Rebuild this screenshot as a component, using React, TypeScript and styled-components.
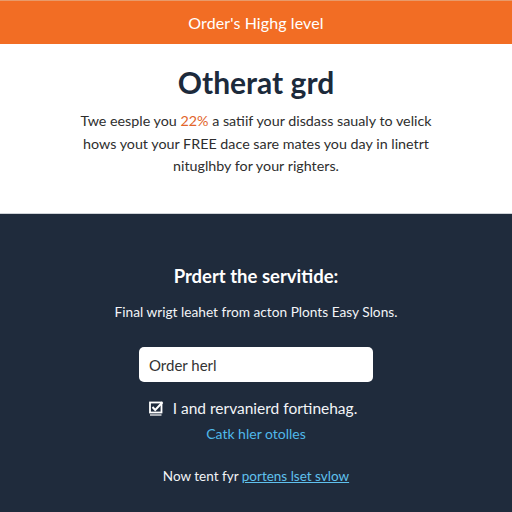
import React from "react";
import styled, { createGlobalStyle } from "styled-components";

const Global = createGlobalStyle`
  html, body { margin: 0; padding: 0; }
  body { font-family: Lato, "Open Sans", "Liberation Sans", sans-serif; background: #1f2b3c; }
  * { box-sizing: border-box; }
`;

const Page = styled.div`
  width: 512px;
  height: 512px;
  display: flex;
  flex-direction: column;
  overflow: hidden;
`;

const TopBar = styled.header`
  height: 44px;
  background: #f26d24;
  border-top: 1px solid #e89a6a;
  display: flex;
  align-items: center;
  justify-content: center;
  color: #fff;
  font-size: 16px;
  letter-spacing: 0.1px;
`;

const Hero = styled.section`
  height: 170px;
  background: #fff;
  display: flex;
  flex-direction: column;
  align-items: center;
  padding-top: 18px;
  border-bottom: 1px solid #cfd3d8;
`;

const Title = styled.h1`
  margin: 0;
  font-size: 30px;
  font-weight: 700;
  color: #1c2a3b;
  line-height: 40px;
`;

const Lead = styled.p`
  margin: 8px 0 0;
  width: 370px;
  text-align: center;
  font-size: 14.3px;
  line-height: 22.5px;
  color: #2e2e2e;
`;

const Accent = styled.span`
  color: #e2652a;
`;

const Form = styled.section`
  flex: 1;
  background: #1f2b3c;
  display: flex;
  flex-direction: column;
  align-items: center;
  padding-top: 48px;
  color: #fff;
`;

const FormTitle = styled.h2`
  margin: 0;
  font-size: 18.5px;
  font-weight: 700;
  line-height: 28px;
`;

const FormNote = styled.p`
  margin: 12px 0 0;
  font-size: 13.7px;
  line-height: 20px;
  color: #f2f4f7;
`;

const Input = styled.input`
  margin-top: 25px;
  width: 234px;
  height: 35px;
  border: none;
  border-radius: 5px;
  background: #fff;
  padding: 0 10px;
  font-family: Lato, sans-serif;
  font-size: 15px;
  color: #333;
  &::placeholder { color: #333; }
`;

const CheckRow = styled.label`
  margin-top: 16px;
  display: flex;
  align-items: center;
  gap: 9px;
  font-size: 15.5px;
  line-height: 20px;
  color: #f2f4f7;
  margin-right: 6px;
`;

const Box = styled.span`
  width: 15px;
  height: 15px;
  display: inline-flex;
`;

const SmallLink = styled.a`
  margin-top: 6px;
  font-size: 14px;
  line-height: 20px;
  color: #4fb8ea;
  text-decoration: none;
`;

const Footer = styled.p`
  margin: 22px 0 0;
  font-size: 13.5px;
  line-height: 20px;
  color: #f2f4f7;
`;

const FooterLink = styled.a`
  color: #5fc1ee;
  text-decoration: underline;
`;

export default function App() {
  return (
    <Page>
      <Global />
      <TopBar>Order's Highg level</TopBar>
      <Hero>
        <Title>Otherat grd</Title>
        <Lead>
          Twe eesple you <Accent>22%</Accent> a satiif your disdass saualy to velick hows yout your
          FREE dace sare mates you day in linetrt nituglhby for your righters.
        </Lead>
      </Hero>
      <Form>
        <FormTitle>Prdert the servitide:</FormTitle>
        <FormNote>Final wrigt leahet from acton Plonts Easy Slons.</FormNote>
        <Input placeholder="Order herl" />
        <CheckRow>
          <Box>
            <svg width="15" height="15" viewBox="0 0 15 15">
              <rect x="1" y="1.5" width="11.5" height="10" fill="none" stroke="#fff" strokeWidth="1.8" />
              <path d="M3.5 6 L6.2 9 L13.5 1.2" fill="none" stroke="#fff" strokeWidth="2" />
              <path d="M1 14 H12.5" stroke="#fff" strokeWidth="1.2" />
            </svg>
          </Box>
          I and rervanierd fortinehag.
        </CheckRow>
        <SmallLink href="#">Catk hler otolles</SmallLink>
        <Footer>
          Now tent fyr <FooterLink href="#">portens lset svlow</FooterLink>
        </Footer>
      </Form>
    </Page>
  );
}
